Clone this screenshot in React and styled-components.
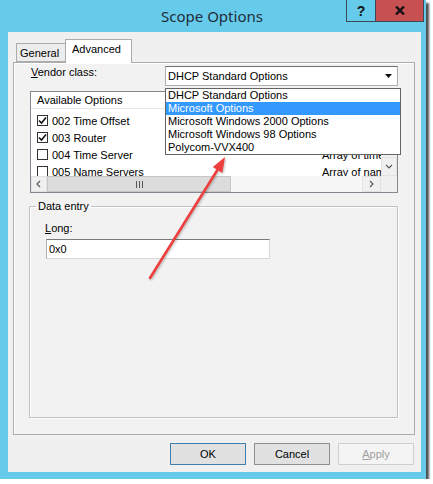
import React from "react";
import styled, { createGlobalStyle } from "styled-components";

const GlobalStyle = createGlobalStyle`
  html, body {
    margin: 0;
    background: #ffffff;
  }
  body {
    font-family: "Liberation Sans", Arial, sans-serif;
    font-size: 11px;
    color: #000;
  }
`;

const Window = styled.div`
  position: relative;
  width: 426px;
  height: 479px;
  background: #66cbea;
  box-shadow: 3px 3px 2px rgba(20, 20, 20, 0.75);
  display: flex;
  flex-direction: column;
`;

const TitleBar = styled.div`
  height: 32px;
  display: grid;
  grid-template-columns: 1fr auto 1fr;
  padding-right: 2px;
`;

const Title = styled.div`
  grid-column: 2;
  align-self: center;
  margin-top: -1px;
  font-family: "Noto Sans", "Open Sans", sans-serif;
  font-size: 15px;
  color: #1f2d3b;
`;

const Caption = styled.div`
  grid-column: 3;
  justify-self: end;
  align-self: start;
  display: flex;
`;

const CaptionButton = styled.div`
  width: ${(p) => p.$w}px;
  height: 22px;
  box-sizing: border-box;
  display: flex;
  align-items: center;
  justify-content: center;
  background: ${(p) => (p.$close ? "#c75050" : "#66cbea")};
  border: 1px solid #3b4a55;
  border-top: none;
  ${(p) => (p.$close ? "border-left: none;" : "")}
  font-weight: bold;
  font-size: 14px;
  color: #111;
`;

const Client = styled.div`
  flex: 1;
  margin: 0 5px 7px 8px;
  background: #f0f0f0;
  padding: 7px 6px 7px 5px;
  display: flex;
  flex-direction: column;
`;

const TabStrip = styled.div`
  height: 23px;
  display: flex;
  align-items: flex-end;
  padding-left: 3px;
  position: relative;
  z-index: 1;
`;

const Tab = styled.div`
  box-sizing: border-box;
  width: ${(p) => p.$w}px;
  height: ${(p) => (p.$active ? 24 : 19)}px;
  margin-bottom: ${(p) => (p.$active ? -1 : 0)}px;
  border: 1px solid #acacac;
  ${(p) => (p.$active ? "border-bottom: none;" : "border-right: none;")}
  background: ${(p) => (p.$active ? "#ffffff" : "#ececec")};
  padding: ${(p) => (p.$active ? "3px 0 0 6px" : "3px 0 0 3px")};
`;

const TabPanel = styled.div`
  flex: 1;
  border: 1px solid #acacac;
  box-shadow: inset 1px 1px 0 #ffffff;
  background: #f2f2f2;
  padding: 3px 16px 0 16px;
  display: flex;
  flex-direction: column;
`;

const VendorRow = styled.div`
  display: flex;
  justify-content: space-between;
  align-items: flex-start;
`;

const Label = styled.div`
  line-height: 13px;
  padding-left: 1px;
`;

const Key = styled.span`
  text-decoration: underline;
  text-underline-offset: 1px;
`;

const Combo = styled.div`
  box-sizing: border-box;
  width: 233px;
  height: 20px;
  background: #fff;
  border: 1px solid #abadb3;
  border-top-color: #6f6f6f;
  display: flex;
  align-items: center;
  padding-left: 2px;
`;

const ComboText = styled.div`
  flex: 1;
`;

const ComboArrow = styled.div`
  width: 17px;
  height: 100%;
  display: flex;
  align-items: center;
  justify-content: center;
`;

const ListHolder = styled.div`
  position: relative;
  margin-top: 5px;
`;

const ListView = styled.div`
  box-sizing: border-box;
  height: 102px;
  border: 1px solid #828790;
  display: grid;
  grid-template-columns: 1fr 16px;
  grid-template-rows: 1fr 16px;
  background: #fff;
`;

const ListContent = styled.div`
  overflow: hidden;
  min-width: 0;
`;

const Header = styled.div`
  height: 16px;
  line-height: 16px;
  border-bottom: 1px solid #e5e5e5;
  display: grid;
  grid-template-columns: 281px 1fr;
  white-space: nowrap;
  padding-left: 6px;
`;

const Rows = styled.div`
  padding-top: 3px;
`;

const Row = styled.div`
  height: 17px;
  display: grid;
  grid-template-columns: 281px 1fr;
  align-items: center;
  white-space: nowrap;
  padding-left: 6px;
`;

const OptionCell = styled.div`
  display: flex;
  align-items: center;
  gap: 4px;
`;

const Check = styled.div`
  box-sizing: border-box;
  width: 11px;
  height: 11px;
  border: 1px solid #333;
  background: #fff;
  display: flex;
  align-items: center;
  justify-content: center;
`;

const DescCell = styled.div`
  padding-left: 4px;
  overflow: hidden;
`;

const VScroll = styled.div`
  background: #f0f0f0;
  display: flex;
  flex-direction: column;
  justify-content: space-between;
`;

const HScroll = styled.div`
  background: #f7f7f7;
  display: flex;
  align-items: stretch;
`;

const ScrollArrow = styled.div`
  box-sizing: border-box;
  width: ${(p) => p.$w || 16}px;
  height: ${(p) => p.$h || 16}px;
  background: #f0f0f0;
  border: 1px solid #e2e2e2;
  display: flex;
  align-items: center;
  justify-content: center;
  flex-shrink: 0;
`;

const Thumb = styled.div`
  box-sizing: border-box;
  width: 184px;
  background: #dcdcdc;
  border: 1px solid #c6c6c6;
  display: flex;
  align-items: center;
  justify-content: center;
`;

const Track = styled.div`
  flex: 1;
`;

const Corner = styled.div`
  background: #f0f0f0;
`;

const DropList = styled.div`
  position: absolute;
  top: -3px;
  left: 135px;
  width: 236px;
  box-sizing: border-box;
  border: 1px solid #646464;
  background: #fff;
  z-index: 2;
`;

const DropItem = styled.div`
  height: 13px;
  line-height: 13px;
  padding-left: 2px;
  white-space: nowrap;
  background: ${(p) => (p.$selected ? "#3399ff" : "transparent")};
  color: ${(p) => (p.$selected ? "#ffffff" : "#000")};
`;

const Group = styled.fieldset`
  flex: 1;
  margin: 7px 0 16px -1px;
  padding: 0 15px;
  border: 1px solid #c0c0c0;
  box-shadow: inset 1px 1px 0 #fff, 1px 1px 0 #fff;
  min-width: 0;
`;

const Legend = styled.legend`
  padding: 0 2px;
  margin-left: -9px;
  line-height: 13px;
`;

const FieldLabel = styled.div`
  margin-top: 9px;
  line-height: 13px;
`;

const TextField = styled.div`
  box-sizing: border-box;
  width: 224px;
  height: 20px;
  margin: 4px 0 0 1px;
  background: #fff;
  border: 1px solid #d8d8d8;
  border-top-color: #7a7a7a;
  border-left-color: #b4b4b4;
  padding-left: 2px;
  line-height: 18px;
`;

const ButtonRow = styled.div`
  margin-top: 8px;
  height: 22px;
  display: flex;
  justify-content: flex-end;
  gap: 8px;
  padding-right: 1px;
`;

const Button = styled.div`
  box-sizing: border-box;
  width: 76px;
  height: 22px;
  display: flex;
  align-items: center;
  justify-content: center;
  background: ${(p) => (p.$disabled ? "#f4f4f4" : "#e1e1e1")};
  border: 1px solid
    ${(p) => (p.$default ? "#3c7fb1" : p.$disabled ? "#cfcfcf" : "#8f8f8f")};
  color: ${(p) => (p.$disabled ? "#a0a0a0" : "#000")};
`;

const Pointer = styled.svg`
  position: absolute;
  left: 0;
  top: 0;
  pointer-events: none;
  filter: drop-shadow(1px 1px 1px rgba(0, 0, 0, 0.25));
  z-index: 3;
`;

const options = [
  { code: "002 Time Offset", desc: "UCT offset in seconds", checked: true },
  { code: "003 Router", desc: "Array of router addresses by preference", checked: true },
  { code: "004 Time Server", desc: "Array of time server addresses, by preference" },
  { code: "005 Name Servers", desc: "Array of name servers [IEN 116], by preference" },
];

const vendors = [
  "DHCP Standard Options",
  "Microsoft Options",
  "Microsoft Windows 2000 Options",
  "Microsoft Windows 98 Options",
  "Polycom-VVX400",
];

const Tick = () => (
  <svg width="9" height="9" viewBox="0 0 9 9">
    <path d="M1 4.5 L3.5 7 L8 1.5" fill="none" stroke="#111" strokeWidth="1.6" />
  </svg>
);

const Chevron = ({ dir }) => {
  const paths = {
    left: "M5 1 L2 4 L5 7",
    right: "M2 1 L5 4 L2 7",
    down: "M1 2 L4 5 L7 2",
    up: "M1 5 L4 2 L7 5",
  };
  return (
    <svg width="8" height="8" viewBox="0 0 8 8">
      <path d={paths[dir]} fill="none" stroke="#555" strokeWidth="1.1" />
    </svg>
  );
};

function App() {
  return (
    <>
      <GlobalStyle />
      <Window>
        <TitleBar>
          <Title>Scope Options</Title>
          <Caption>
            <CaptionButton $w={30}>?</CaptionButton>
            <CaptionButton $w={48} $close>
              <svg width="10" height="9" viewBox="0 0 10 9">
                <path d="M1 0.5 L9 8.5 M9 0.5 L1 8.5" stroke="#111" strokeWidth="2.4" />
              </svg>
            </CaptionButton>
          </Caption>
        </TitleBar>

        <Client>
          <TabStrip>
            <Tab $w={49}>General</Tab>
            <Tab $w={67} $active>Advanced</Tab>
          </TabStrip>

          <TabPanel>
            <VendorRow>
              <Label>
                <Key>V</Key>endor class:
              </Label>
              <Combo>
                <ComboText>DHCP Standard Options</ComboText>
                <ComboArrow>
                  <svg width="7" height="4" viewBox="0 0 7 4">
                    <path d="M0 0 H7 L3.5 4 Z" fill="#111" />
                  </svg>
                </ComboArrow>
              </Combo>
            </VendorRow>

            <ListHolder>
              <ListView>
                <ListContent>
                  <Header>
                    <span>Available Options</span>
                    <span>Description</span>
                  </Header>
                  <Rows>
                    {options.map((o) => (
                      <Row key={o.code}>
                        <OptionCell>
                          <Check>{o.checked && <Tick />}</Check>
                          {o.code}
                        </OptionCell>
                        <DescCell>{o.desc}</DescCell>
                      </Row>
                    ))}
                  </Rows>
                </ListContent>
                <VScroll>
                  <ScrollArrow $h={19}>
                    <Chevron dir="up" />
                  </ScrollArrow>
                  <ScrollArrow $h={19}>
                    <Chevron dir="down" />
                  </ScrollArrow>
                </VScroll>
                <HScroll>
                  <ScrollArrow>
                    <Chevron dir="left" />
                  </ScrollArrow>
                  <Thumb>
                    <svg width="7" height="7" viewBox="0 0 7 7">
                      <path d="M0.5 0 V7 M3.5 0 V7 M6.5 0 V7" stroke="#555" strokeWidth="1" />
                    </svg>
                  </Thumb>
                  <Track />
                  <ScrollArrow $w={19}>
                    <Chevron dir="right" />
                  </ScrollArrow>
                </HScroll>
                <Corner />
              </ListView>

              <DropList>
                {vendors.map((v, i) => (
                  <DropItem key={v} $selected={i === 1}>
                    {v}
                  </DropItem>
                ))}
              </DropList>
            </ListHolder>

            <Group>
              <Legend>Data entry</Legend>
              <FieldLabel>
                <Key>L</Key>ong:
              </FieldLabel>
              <TextField>0x0</TextField>
            </Group>
          </TabPanel>

          <ButtonRow>
            <Button $default>OK</Button>
            <Button>Cancel</Button>
            <Button $disabled>
              <span>
                <Key>A</Key>pply
              </span>
            </Button>
          </ButtonRow>
        </Client>

        <Pointer width="426" height="479" viewBox="0 0 426 479">
          <line x1="150" y1="278" x2="218" y2="169" stroke="#ee3f3f" strokeWidth="2.6" strokeLinecap="round" />
          <polygon points="225,157 222.4,173 212.8,167" fill="#ee3f3f" />
        </Pointer>
      </Window>
    </>
  );
}

export default App;
